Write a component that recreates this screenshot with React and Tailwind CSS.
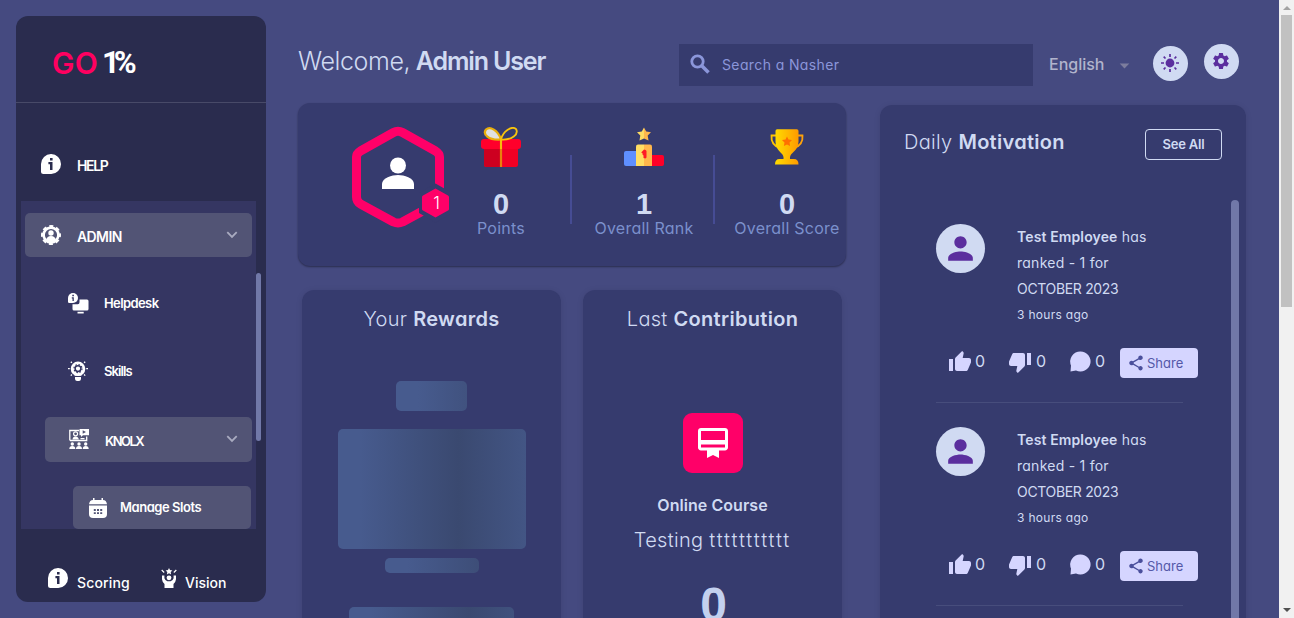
import React from "react";
import {
  MdPerson,
  MdSettings,
  MdThumbUp,
  MdThumbDown,
  MdShare,
  MdCardMembership,
  MdArrowDropDown,
} from "react-icons/md";

function InfoBubble({ className }) {
  return (
    <svg viewBox="0 0 20 20" className={className}>
      <path
        d="M10.2 0A9.8 9.9 0 0 1 20 9.9 9.8 10 0 0 1 10.2 20H2.5Q0 20 0 17.5V10A10.1 10 0 0 1 10.2 0z"
        fill="#fff"
      />
      <path d="M9 4h2.6v2.500H9zM7.400 8h4.100v8H9v-5.700H7.400z" fill="#2a2c4e" />
    </svg>
  );
}

function UserGear({ className }) {
  return (
    <svg viewBox="0 0 20 20" className={className}>
      <circle cx="10" cy="10" r="7.400" fill="none" stroke="#fff" strokeWidth="2.600" />
      <circle cx="10" cy="10" r="8.900" fill="none" stroke="#fff" strokeWidth="2.200" strokeDasharray="4 2.990" strokeDashoffset="2" />
      <circle cx="10" cy="8" r="2.700" fill="#fff" />
      <path d="M5.200 15.500c0-3 2-4.600 4.800-4.600s4.800 1.600 4.800 4.600L10 18z" fill="#fff" />
    </svg>
  );
}

function HelpdeskIcon({ className }) {
  return (
    <svg viewBox="0 0 21 21" className={className} fill="#fff">
      <path d="M11.500 6.500H19q1.500 0 1.500 1.500v8.100q0 1.500-1.500 1.500H6q-1.500 0-1.500-1.500V11.200h5.300q1.700 0 1.700-2z" />
      <path d="M9.500 18.800h6.200v1.700H9.500z" />
      <path d="M5 0a5 5 0 0 1 0 10H1.200Q0 10 0 8.800V5a5 5 0 0 1 5-5z" />
      <path d="M4.300 1.800h1.600v1.500H4.300zM3.800 4.300h2V8H4.500V5.500h-.7z" fill="#353662" />
    </svg>
  );
}

function BulbIcon({ className }) {
  return (
    <svg viewBox="0 0 20 20" className={className}>
      <circle cx="10" cy="7.800" r="7.300" fill="#fff" />
      <path d="M6.500 12h7v2.800h-7zM7 16h6v2q-.3 2-2 2H9q-1.700 0-2-2z" fill="#fff" />
      <circle cx="10" cy="7.600" r="2.900" fill="none" stroke="#353662" strokeWidth="1.500" />
      <circle cx="10" cy="7.600" r="4" fill="none" stroke="#353662" strokeWidth="1.200" strokeDasharray="1.500 1.640" />
      <path d="M0 7.600h1.800M18.200 7.600H20M2.800.7l1.100 1.100M17.200.7l-1.100 1.100M2.800 14.600l1.100-1.100M17.200 14.600l-1.100-1.100" stroke="#fff" strokeWidth="1.300" />
    </svg>
  );
}

function ClassIcon({ className }) {
  return (
    <svg viewBox="0 0 20 20" className={className} fill="#fff">
      <path d="M.8 11.500V1.500H10M17.700 7.500v4H1" fill="none" stroke="#fff" strokeWidth="1.300" />
      <path d="M10.500 0H20v6.300h-6l-2 1.700V6.300h-1.500z" />
      <path d="M13.700 1.300v3.500L17 3z" fill="#525475" />
      <circle cx="6.600" cy="4.800" r="2" fill="none" stroke="#fff" strokeWidth="1.200" />
      <path d="M3.500 10.500q.3-3 3-3t3.400 3zM11.500 9h4v1.300h-4z" />
      <circle cx="3.300" cy="15" r="1.700" />
      <circle cx="10" cy="15" r="1.700" />
      <circle cx="16.700" cy="15" r="1.700" />
      <path d="M.3 20q0-3 3-3t3 3zM7 20q0-3 3-3t3 3zM13.700 20q0-3 3-3t3 3z" />
    </svg>
  );
}

function SlotsIcon({ className }) {
  return (
    <svg viewBox="0 0 18 20" className={className} fill="#fff">
      <path d="M4 0h1.500v2h7V0H14v2q3.400 0 4 4.300H0Q.6 2 4 2z" />
      <path d="M0 7.600h18V16q0 4-4 4H4q-4 0-4-4z" />
      <path
        d="M4.800 11h2v1.900h-2zM8 11h2v1.900H8zM11.200 11h2v1.900h-2zM4.800 14.200h2v1.900h-2zM8 14.200h2v1.900H8zM11.200 14.200h2v1.900h-2z"
        fill="#525475"
      />
    </svg>
  );
}

function VisionIcon({ className }) {
  return (
    <svg viewBox="0 0 16 20" className={className} fill="#fff">
      <path d="M8 0l1 2.100 2.400.3-1.700 1.600.4 2.400L8 5.300 5.900 6.400l.4-2.400-1.700-1.600L7 2.100z" />
      <circle cx="8" cy="9.800" r="2.400" />
      <path d="M1 7.500h2.400v2.800q1 2.900 3 2.900h3.200q2 0 3-2.900V7.500H15v3.800q-.3 3-2.500 4.700V20h-9v-4Q1.300 14.300 1 11.300z" />
      <path d="M.7 2l2.500 2.500M15.300 2l-2.500 2.500" stroke="#fff" strokeWidth="1.200" />
    </svg>
  );
}

function Chevron() {
  return (
    <svg viewBox="0 0 12 8" className="-mt-px h-2 w-3 shrink-0">
      <path d="M1.300 1.200L6 5.900l4.700-4.700" fill="none" stroke="#a9abc0" strokeWidth="1.800" />
    </svg>
  );
}

function Sidebar() {
  return (
    <aside className="ml-4 mt-4 flex h-[586px] w-[250px] shrink-0 flex-col overflow-hidden rounded-xl bg-[#2a2c4e] font-semibold text-white">
      <div className="flex h-[87px] shrink-0 items-center border-b border-[#484a68] pl-[36px] pt-[8px] leading-8">
        <span className="w-[50px] text-[30px] font-semibold tracking-[0.3px] text-[#ff0060]">GO</span>
        <span className="font-['Roboto',sans-serif] text-[31px] font-bold tracking-[-6px]">1%</span>
      </div>
      <div className="flex h-[98px] shrink-0 items-center pl-[25px] pt-[23px]">
        <InfoBubble className="h-5 w-5" />
        <span className="ml-4 pt-1 text-sm leading-5 tracking-[-1.350px]">HELP</span>
      </div>
      <div className="flex h-[328px] shrink-0 pl-[5px]">
        <nav className="flex w-[235px] flex-col overflow-hidden bg-[#353662] pl-1 pr-1 pt-3">
          <div className="flex h-11 shrink-0 items-center rounded-[5px] bg-[#525475] pl-4 pr-[14px]">
            <UserGear className="h-5 w-5" />
            <span className="ml-4 flex-1 pt-[3px] text-sm tracking-[-0.6px]">ADMIN</span>
            <Chevron />
          </div>
          <div className="mt-[24px] flex h-[44px] shrink-0 items-center pl-[43px]">
            <HelpdeskIcon className="h-[21px] w-[21px]" />
            <span className="ml-[15px] pt-[2px] text-[13px] tracking-[-0.6px]">Helpdesk</span>
          </div>
          <div className="mt-[24px] flex h-[44px] shrink-0 items-center pl-[43px]">
            <BulbIcon className="h-5 w-5" />
            <span className="ml-4 pt-[2px] text-[13px] tracking-[-0.9px]">Skills</span>
          </div>
          <div className="ml-5 mt-[24px] flex h-[45px] shrink-0 items-center rounded-[5px] bg-[#525475] pl-6 pr-[14px]">
            <ClassIcon className="-mt-px h-5 w-5" />
            <span className="ml-4 flex-1 pt-1 text-[13px] tracking-[-1.500px]">KNOLX</span>
            <Chevron />
          </div>
          <div className="ml-[48px] mr-px mt-[24px] flex h-[43px] shrink-0 items-center rounded-[5px] bg-[#525475] pl-4">
            <SlotsIcon className="h-5 w-[18px]" />
            <span className="ml-[13px] text-[13px] tracking-[-0.45px]">Manage Slots</span>
          </div>
        </nav>
        <div className="mt-[72px] h-[168px] w-[5px] rounded-full bg-[#7178a8]" />
      </div>
      <div className="flex flex-1 items-center pl-8 pt-[34px] text-sm font-medium">
        <InfoBubble className="-mt-[10px] h-5 w-5" />
        <span className="ml-[9px] w-[84px] tracking-[0.15px]">Scoring</span>
        <VisionIcon className="-mt-[10px] h-5 w-4" />
        <span className="ml-[8px]">Vision</span>
      </div>
    </aside>
  );
}

function Header() {
  return (
    <header className="flex h-[87px] shrink-0 items-start">
      <h1 className="mt-[45px] w-[381px] whitespace-nowrap text-[25px] font-light leading-8 tracking-[-0.4px] text-[#d0daf2]">
        Welcome, <b className="-ml-px font-semibold tracking-[-1.150px]">Admin User</b>
      </h1>
      <div className="mt-[44px] flex h-[42px] w-[354px] shrink-0 items-center bg-[#363b6e] pl-[11px] text-[#8b96da]">
        <svg viewBox="0 0 20 20" className="-mt-[3px] h-5 w-5" fill="none" stroke="currentColor">
          <circle cx="7.500" cy="7.500" r="5.700" strokeWidth="2.800" />
          <path d="M12 12l6.500 6.500" strokeWidth="3.600" />
        </svg>
        <span className="ml-[12px] text-sm tracking-[0.38px]">Search a Nasher</span>
      </div>
      <div className="ml-[16px] mt-[54px] flex w-[104px] shrink-0 items-center leading-5">
        <span className="-mt-[3px] w-[64px] font-medium text-[#b1b4cc]">English</span>
        <MdArrowDropDown className="h-[23px] w-[23px] text-[#7c7d9d]" />
      </div>
      <div className="mt-[46px] flex h-[35px] w-[35px] shrink-0 items-center justify-center rounded-full bg-[#d0daf2]">
        <svg viewBox="0 0 20 20" className="-ml-px -mt-px h-5 w-5 text-[#5b2e9e]">
          <circle cx="10" cy="10" r="4.400" fill="currentColor" />
          <path
            d="M10 1v3M10 16v3M1 10h3M16 10h3M3.700 3.700l1.800 1.800M14.500 14.500l1.800 1.800M3.700 16.300l1.800-1.800M14.500 5.500l1.800-1.800"
            stroke="currentColor"
            strokeWidth="1.700"
          />
        </svg>
      </div>
      <div className="ml-4 mt-[44px] flex h-[35px] w-[35px] shrink-0 items-center justify-center rounded-full bg-[#d0daf2]">
        <MdSettings className="-ml-px -mt-0.5 h-5 w-5 text-[#5b2e9e]" />
      </div>
    </header>
  );
}

function RankBadge() {
  return (
    <svg viewBox="0 0 100 104" className="h-[104px] w-[100px] shrink-0">
      <path
        d="M43.500 7.500Q48 5 52.500 7.500L85.500 26Q89.500 28.500 89.500 32V72Q89.500 76.500 85.500 79L52.500 97Q48 99 43.500 97L10.500 79Q6.500 76.500 6.500 72V32Q6.500 28.500 10.500 26Z"
        fill="none"
        stroke="#ff0068"
        strokeWidth="9"
        strokeLinejoin="round"
      />
      <path d="M85.500 58.500L102 68V88L85.500 97.500L69 88V68Z" fill="#363b6e" />
      <path d="M85.500 63.500L98 70.500Q99 71 99 72V84Q99 85 98 85.500L85.500 92.500L73 85.500Q72 85 72 84V72Q72 71 73 70.500Z" fill="#ff0068" />
      <circle cx="48" cy="40.500" r="8" fill="#fff" />
      <path d="M32 64V59C32 53 42 50 48 50S64 53 64 59V64Z" fill="#fff" />
      <text x="86.500" y="84" textAnchor="middle" fill="#fff" fontSize="17" fontWeight="300">
        1
      </text>
    </svg>
  );
}

function Gift() {
  return (
    <svg viewBox="0 0 40 40" className="h-10 w-10">
      <rect x="3" y="18" width="34" height="22" rx="2.500" fill="#f10024" />
      <path d="M3 20h17v20H5.500Q3 40 3 37.500z" fill="#cd0020" />
      <rect x="0" y="12" width="40" height="10" rx="3" fill="#ff002b" />
      <path d="M20 12.500C17 3 9-1 5 2.500 1.500 7 7 13.500 20 12.500z" fill="#e0e0e0" stroke="#e8ae0b" strokeWidth="2.200" />
      <path d="M20 12.500C22 4 31-1.500 35 2c3 5-4 11.500-15 10.500z" fill="#363b6e" stroke="#f9c40c" strokeWidth="1.800" />
      <path d="M20 11v29" stroke="#e8800c" strokeWidth="2.200" />
      <path d="M20 11v11" stroke="#f9c40c" strokeWidth="1.800" />
    </svg>
  );
}

function Podium() {
  return (
    <svg viewBox="0 0 40 40" className="h-10 w-10">
      <rect x="0" y="24" width="16" height="15" rx="2" fill="#5f8fff" />
      <rect x="24" y="28" width="16" height="11" rx="2" fill="#ff0028" />
      <path d="M12 39V19.500q0-2 2-2h6V39z" fill="#ffdd63" />
      <path d="M20 17.500h6q2 0 2 2V39h-8z" fill="#ffb74c" />
      <path d="M20 22.500l-2.800 3 1.300.8v1.200l1 1V31l2 .5 1-1V24q-.5-1.500-2.500-1.500z" fill="#ff1a25" />
      <path d="M20 .5l2.200 4 4.800.8-3.300 3.300.8 4.900-4.500-2z" fill="#ffb74c" />
      <path d="M20 .5l-2.200 4-4.800.8 3.300 3.300-.8 4.900 4.500-2z" fill="#ffdd63" />
    </svg>
  );
}

function Trophy() {
  return (
    <svg viewBox="0 0 40 40" className="h-10 w-10">
      <defs>
        <linearGradient id="gold" x1="0" x2="1">
          <stop offset="0" stopColor="#ffdc00" />
          <stop offset="1" stopColor="#ff9a00" />
        </linearGradient>
      </defs>
      <path d="M9.500 8.500H4.500q-.8 9.500 8.500 12.500" fill="none" stroke="#ffc400" strokeWidth="1.800" />
      <path d="M30.500 8.500h5q.8 9.500-8.500 12.500" fill="none" stroke="#ffa20a" strokeWidth="1.800" />
      <path
        d="M8.500 4q0-1.700 1.700-1.700h19.600q1.700 0 1.700 1.700v10.500q0 6.500-6 11.500-3 2.500-2.500 6h4q4.500 0 4.500 5.500H8q0-5.500 4.500-5.500h4q.5-3.500-2.500-6-5.500-5-5.500-11.500z"
        fill="url(#gold)"
      />
      <path d="M20 9.500l1.500 3.100 3.500.4-2.500 2.500.6 3.500-3.100-1.600-3.100 1.600.6-3.500L15 13l3.500-.4z" fill="#ff6f00" />
    </svg>
  );
}

function Stat({ icon, value, className, children }) {
  return (
    <div className={`flex shrink-0 flex-col items-center whitespace-nowrap ${className}`}>
      {icon}
      <span className="mt-[21px] font-['Liberation_Sans',sans-serif] text-[29px] font-bold leading-8 text-[#d0daf2]">{value}</span>
      <span className="text-base leading-[17px] tracking-[0.25px] text-[#7b90cc]">{children}</span>
    </div>
  );
}

function Stats() {
  return (
    <section className="mt-4 flex h-[163px] w-[548px] shrink-0 rounded-xl bg-[#363b6e] pt-6 shadow-[0_1px_2px_#00000066]">
      <div className="-mt-[2px] ml-[52px] w-[82px] shrink-0">
        <RankBadge />
      </div>
      <Stat className="w-[138px]" icon={<Gift />} value="0">Points</Stat>
      <div className="mt-7 h-[69px] w-[2px] shrink-0 bg-[#464c94]" />
      <Stat className="w-[141px] pl-[3px]" icon={<Podium />} value="1">Overall Rank</Stat>
      <div className="mt-7 h-[69px] w-[2px] shrink-0 bg-[#464c94]" />
      <Stat className="w-[131px] pl-[13px]" icon={<Trophy />} value="0">Overall Score</Stat>
    </section>
  );
}

function Title({ light, children }) {
  return (
    <h2 className="whitespace-nowrap text-xl font-light leading-6 tracking-[0.3px] text-[#d0daf2]">
      {light} <b className="font-semibold">{children}</b>
    </h2>
  );
}

const shimmer =
  "rounded-[5px] bg-[linear-gradient(90deg,#475b8e_22px,#3a4970_120px,#475b8e_220px)] shrink-0";

function Rewards() {
  return (
    <section className="flex h-[340px] w-[259px] shrink-0 flex-col items-center rounded-xl bg-[#363b6e] pt-[17px] shadow-[0_1px_6px_#0000001a]">
      <Title light="Your">Rewards</Title>
      <div className={`mt-[50px] h-[30px] w-[71px] ${shimmer}`} />
      <div className={`mt-[18px] h-[120px] w-[188px] ${shimmer}`} />
      <div className={`mt-[9px] h-[15px] w-[94px] ${shimmer}`} />
      <div className={`mt-[34px] h-[30px] w-[165px] ${shimmer}`} />
    </section>
  );
}

function Contribution() {
  return (
    <section className="flex h-[340px] w-[259px] shrink-0 flex-col items-center whitespace-nowrap rounded-xl bg-[#363b6e] pt-[17px] text-[#d0daf2] shadow-[0_1px_6px_#0000001a]">
      <Title light="Last">Contribution</Title>
      <div className="mt-[82px] flex h-[60px] w-[60px] shrink-0 items-center justify-center rounded-[9px] bg-[#ff0068]">
        <MdCardMembership className="h-9 w-9 text-white" />
      </div>
      <p className="mt-5 font-semibold leading-6 tracking-[0.05px]">Online Course</p>
      <p className="mt-[11px] text-xl font-light leading-6">
        <span className="tracking-[0.3px]">Testing </span>
        <span className="tracking-[1.900px]">ttttttttttt</span>
      </p>
      <p className="mt-[30px] pl-[2px] font-['Liberation_Sans',sans-serif] text-[48px] font-bold leading-[46px] text-[#c3d0ee]">0</p>
    </section>
  );
}

function Count({ icon, className }) {
  return (
    <div className={`flex items-center text-[#d5d5ff] ${className}`}>
      {icon}
      <span className="-mt-[2px] text-base leading-6 text-[#d0daf2]">0</span>
    </div>
  );
}

function Post() {
  return (
    <article className="h-[203px] w-[262px] shrink-0">
      <div className="flex">
        <div className="flex h-[49px] w-[49px] items-center justify-center rounded-full bg-[#d0daf2]">
          <MdPerson className="h-[37px] w-[37px] text-[#5b2e9e]" />
        </div>
        <div className="ml-8 whitespace-nowrap text-sm leading-[26px] tracking-[0.25px] text-[#d0daf2]">
          <p>
            <b className="font-semibold tracking-[0.12px]">Test Employee</b> has
          </p>
          <p>ranked - 1 for</p>
          <p className="tracking-[-0.33px]">OCTOBER 2023</p>
          <p className="text-xs leading-[26px] tracking-[0.3px]">3 hours ago</p>
        </div>
      </div>
      <div className="mt-5 flex h-[30px] items-center">
        <div className="-mt-[3px] ml-3 flex">
          <Count className="w-[60px] gap-[3px]" icon={<MdThumbUp className="h-6 w-6" />} />
          <Count className="w-[62px] gap-[4px]" icon={<MdThumbDown className="h-6 w-6" />} />
          <Count
            className="w-[50px] gap-[4px]"
            icon={
              <svg viewBox="0 0 21 21" className="h-[21px] w-[21px]">
                <path d="M10.500.5a10 10 0 1 1-4.500 18.900L.5 20.500 1 14.500A10 10 0 0 1 10.500.5z" fill="currentColor" />
              </svg>
            }
          />
        </div>
        <div className="flex h-[30px] w-[78px] items-center rounded-[4px] bg-[#d5d5ff] pl-[7px] text-[13px] text-[#5458a8]">
          <MdShare className="mr-[2px] h-[18px] w-[18px] text-[#4a4f9c]" />
          <span className="pt-[2px]">Share</span>
        </div>
      </div>
      <div className="mt-6 h-px w-[247px] bg-[#474d7c]" />
    </article>
  );
}

function Motivation() {
  return (
    <section className="ml-[34px] mt-[18px] flex h-[530px] w-[366px] shrink-0 flex-col rounded-xl bg-[#363b6e] shadow-[0_1px_6px_#0000001a]">
      <div className="flex h-[95px] shrink-0 items-start justify-between pl-6 pr-6 pt-6">
        <div className="pt-px">
          <Title light="Daily">Motivation</Title>
        </div>
        <button className="h-[31px] w-[77px] rounded-[4px] border border-[#d0daf2] text-[13px] font-semibold tracking-[-0.2px] text-[#d0daf2]">
          See All
        </button>
      </div>
      <div className="flex h-[435px] justify-between overflow-hidden pl-14 pr-[7px]">
        <div className="pt-6">
          <Post />
          <Post />
        </div>
        <div className="w-2 rounded-full bg-[#7178a8]" />
      </div>
    </section>
  );
}

function PageScrollbar() {
  return (
    <div className="flex h-[618px] w-[15px] shrink-0 flex-col items-center justify-between bg-[#f1f1f1]">
      <div className="flex flex-col items-center">
        <svg viewBox="0 0 8 4" className="mb-[5px] mt-[6px] h-1 w-2">
          <path d="M4 0l4 4H0z" fill="#a3a3a3" />
        </svg>
        <div className="h-[292px] w-[11px] bg-[#c1c1c1]" />
      </div>
      <svg viewBox="0 0 8 4" className="mb-[6px] h-1 w-2">
        <path d="M4 4L0 0h8z" fill="#505050" />
      </svg>
    </div>
  );
}

export default function App() {
  return (
    <div className="flex h-[618px] w-[1294px] overflow-hidden bg-[#454a80] font-['Inter',sans-serif] [font-feature-settings:'cv11']">
      <Sidebar />
      <main className="ml-8 flex w-[981px] shrink-0 flex-col">
        <Header />
        <div className="flex">
          <div className="w-[548px] shrink-0">
            <Stats />
            <div className="ml-1 mt-[24px] flex gap-[22px]">
              <Rewards />
              <Contribution />
            </div>
          </div>
          <Motivation />
        </div>
      </main>
      <PageScrollbar />
    </div>
  );
}
